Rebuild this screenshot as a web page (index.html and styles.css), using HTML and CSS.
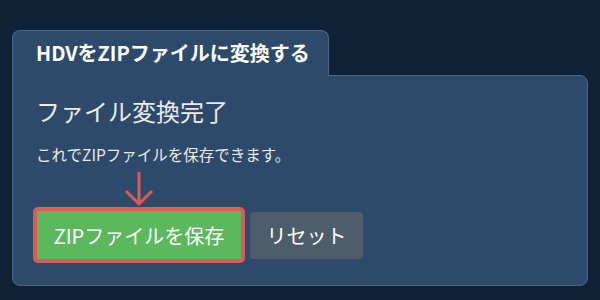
FILE: index.html
```html
<!DOCTYPE html>
<html lang="ja">
<head>
    <meta charset="UTF-8">
    <meta name="viewport" content="width=device-width, initial-scale=1.0">
    <title>HDVをZIPファイルに変換する</title>
    <link rel="stylesheet" href="styles.css">
</head>
<body>
    <div class="container">
        <div class="tab">HDVをZIPファイルに変換する</div>

        <div class="panel">
            <h2>ファイル変換完了</h2>
            <p class="message">これでZIPファイルを保存できます。</p>

            <svg class="arrow" width="30" height="36" viewBox="0 0 30 36">
                <path d="M15 1 V33 M2 20 L15 33 L28 20" fill="none" stroke="#dc5b58" stroke-width="3"></path>
            </svg>

            <div class="actions">
                <button class="save-btn">ZIPファイルを保存</button>
                <button class="reset-btn">リセット</button>
            </div>
        </div>
    </div>
</body>
</html>
```

FILE: styles.css
```css
* {
    margin: 0;
    padding: 0;
    box-sizing: border-box;
    font-family: 'Noto Sans CJK JP', 'Noto Sans', sans-serif;
}

body {
    background: #0f2237;
    color: #ebebeb;
    min-height: 100vh;
}

.container {
    padding: 30px 12px 0 12px;
}

.tab {
    display: inline-block;
    position: relative;
    z-index: 1;
    margin-bottom: -1px;
    padding: 8px 18px 10px 23px;
    background: #2d4a6a;
    border: 1px solid #4a6686;
    border-bottom: none;
    border-radius: 8px 8px 0 0;
    color: #ffffff;
    font-size: 20px;
    font-weight: bold;
    line-height: 27px;
}

.panel {
    background: #2d4a6a;
    border: 1px solid #4a6686;
    border-radius: 0 8px 8px 8px;
    padding: 20px 23px 20px 23px;
    height: 211px;
}

h2 {
    font-size: 24px;
    font-weight: normal;
    line-height: 30px;
    color: #ebebeb;
}

.message {
    margin-top: 17px;
    font-size: 15.5px;
    line-height: 22px;
    color: #ebebeb;
}

.arrow {
    display: block;
    margin: 6px 0 0 88px;
}

.actions {
    display: flex;
    align-items: center;
    gap: 5px;
    margin-left: -3px;
}

button {
    border: none;
    border-radius: 4px;
    color: #ffffff;
    cursor: pointer;
    font-size: 20px;
}

.save-btn {
    background: #5cb85c;
    border: 4px solid #dc5b58;
    border-radius: 5px;
    width: 212px;
    height: 56px;
}

.reset-btn {
    background: #4e5d6c;
    width: 113px;
    height: 47px;
}
```
